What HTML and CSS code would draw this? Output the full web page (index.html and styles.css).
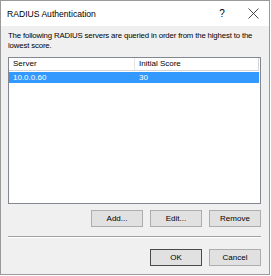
FILE: index.html
```html
<!DOCTYPE html>
<html>
<head>
<meta charset="utf-8">
<link rel="stylesheet" href="styles.css">
</head>
<body>
<div class="window">
  <div class="titlebar">
    <span class="title">RADIUS Authentication</span>
    <span class="help">?</span>
    <span class="close">
      <svg width="11" height="11" viewBox="0 0 11 11"><path d="M0.5 0.5 L10.5 10.5 M10.5 0.5 L0.5 10.5" stroke="#333" stroke-width="0.9" fill="none"/></svg>
    </span>
  </div>
  <div class="content">
    <p class="desc">The following RADIUS servers are queried in order from the highest to the lowest score.</p>
    <div class="list">
      <div class="header">
        <div class="col col1">Server</div>
        <div class="col col2">Initial Score</div>
      </div>
      <div class="row selected">
        <div class="col col1">10.0.0.60</div>
        <div class="col col2">30</div>
      </div>
    </div>
    <div class="actions">
      <button class="btn">Add...</button>
      <button class="btn">Edit...</button>
      <button class="btn">Remove</button>
    </div>
    <div class="separator"></div>
    <div class="actions footer">
      <button class="btn default">OK</button>
      <button class="btn">Cancel</button>
    </div>
  </div>
</div>
</body>
</html>
```
FILE: styles.css
```css
html, body {
  margin: 0;
  padding: 0;
  background: #ffffff;
}
body {
  font-family: "Liberation Sans", Arial, sans-serif;
  font-size: 8px;
  color: #000;
}
.window {
  width: 268px;
  height: 273px;
  border: 1px solid #9a9a9a;
  background: #f0f0f0;
  display: flex;
  flex-direction: column;
}
.titlebar {
  height: 25px;
  background: #ffffff;
  display: flex;
  align-items: center;
  padding-left: 6px;
  font-size: 8.6px;
}
.title {
  flex: 1;
}
.help {
  width: 12px;
  margin-right: 20px;
  font-size: 10px;
  text-align: center;
}
.close {
  width: 11px;
  margin-right: 10px;
  display: flex;
}
.content {
  flex: 1;
  display: flex;
  flex-direction: column;
  padding: 5px 8px 0 7px;
}
.desc {
  margin: 0;
  line-height: 10px;
  height: 20px;
  font-size: 7.8px;
  letter-spacing: -0.15px;
}
.list {
  margin-top: 6px;
  height: 145px;
  border: 1px solid #828790;
  background: #ffffff;
}
.header {
  display: flex;
  height: 12px;
  line-height: 12px;
  border-bottom: 1px solid #d5d5d5;
  margin-right: 1px;
}
.header .col1 {
  border-right: 1px solid #e5e5e5;
}
.header .col2 {
  border-right: 1px solid #d5d5d5;
}
.col {
  padding-left: 4px;
  box-sizing: border-box;
}
.col1 {
  width: 126px;
}
.col2 {
  flex: 1;
}
.row {
  display: flex;
  height: 11px;
  line-height: 11px;
  margin-top: 1px;
  margin-right: 1px;
}
.row.selected {
  background: #3399ff;
  color: #ffffff;
}
.actions {
  display: flex;
  justify-content: flex-end;
  gap: 7px;
  margin-top: 6px;
}
.btn {
  width: 52px;
  height: 17px;
  padding: 0;
  margin: 0;
  font-family: "Liberation Sans", Arial, sans-serif;
  font-size: 8px;
  color: #000;
  background: #e1e1e1;
  border: 1px solid #adadad;
  border-radius: 0;
}
.btn.default {
  border: 1px solid #4a4a4a;
}
.separator {
  margin-top: 9px;
  height: 1px;
  background: #a0a0a0;
  border-bottom: 1px solid #ffffff;
}
.footer {
  margin-top: 11px;
}
```
